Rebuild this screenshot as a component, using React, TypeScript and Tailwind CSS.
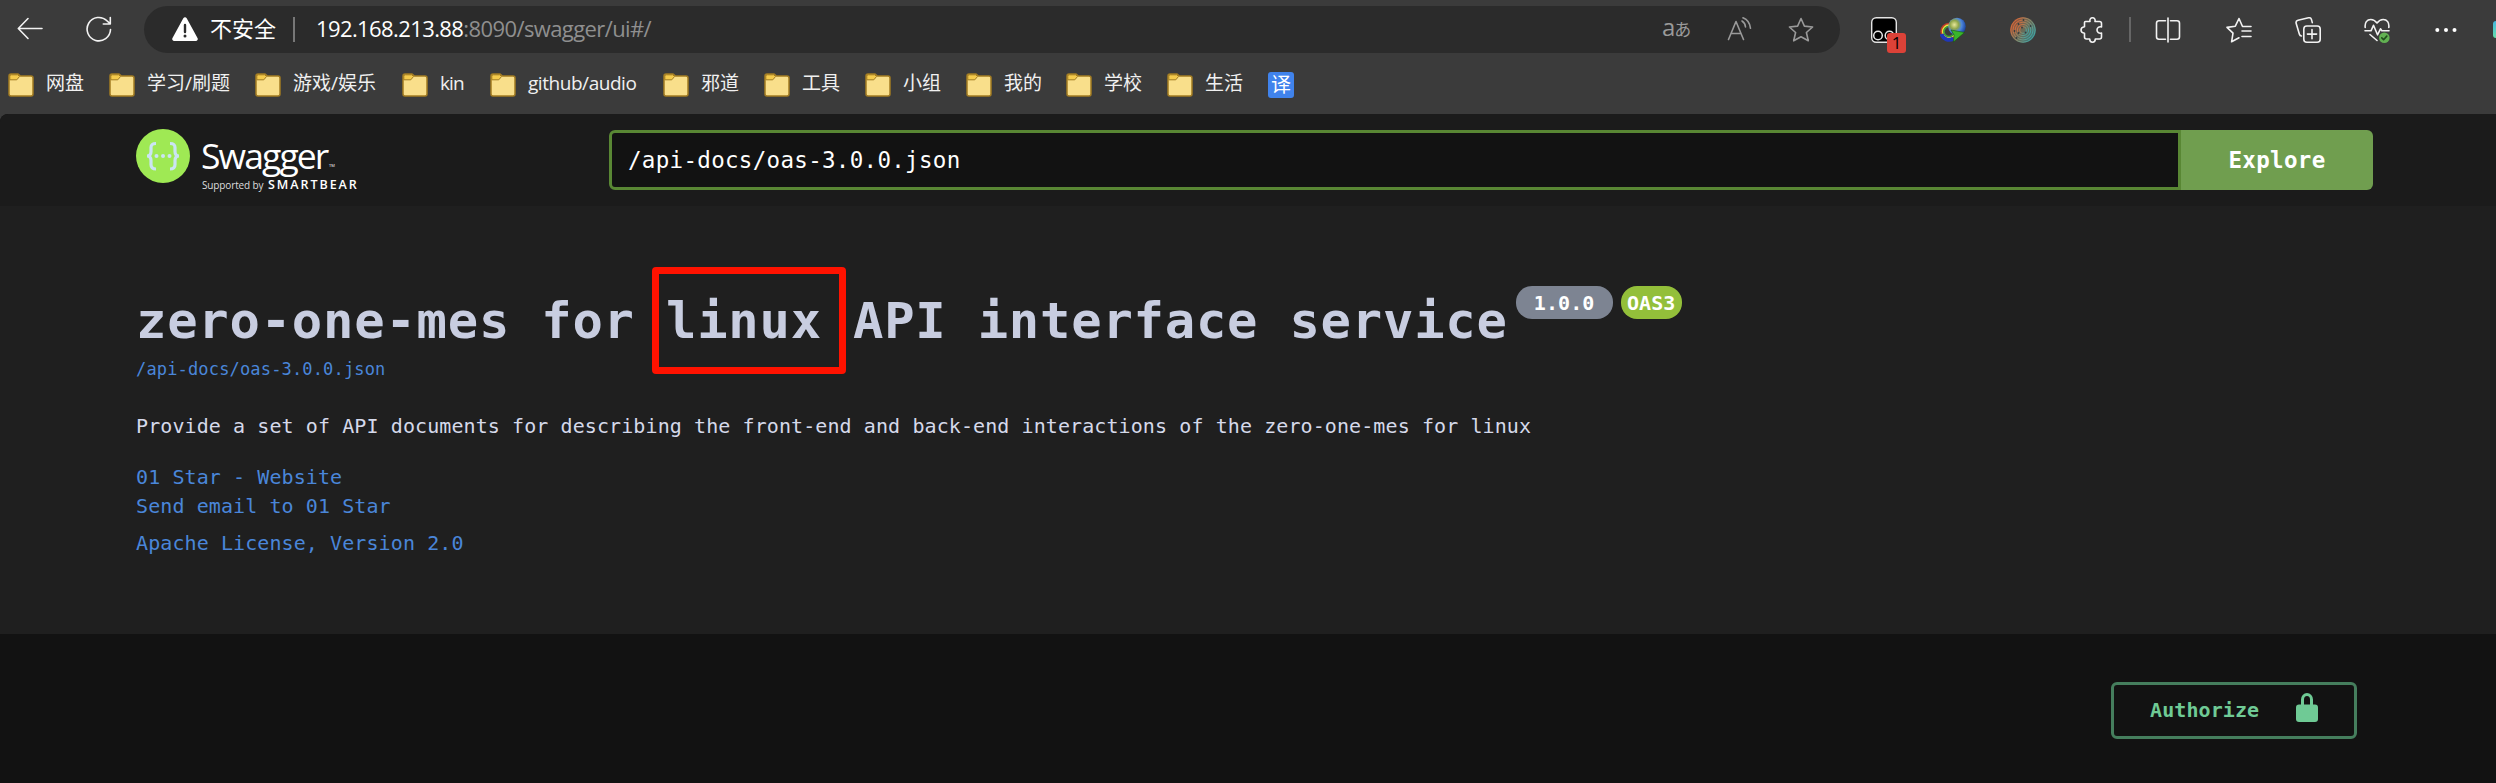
import type { ReactNode } from "react";

const MONO = "font-['DejaVu_Sans_Mono',monospace]";
const UI = "font-['Open_Sans','Noto_Sans_CJK_SC',sans-serif]";

function Icon({ className, children }: { className: string; children: ReactNode }) {
  return (
    <svg
      viewBox="0 0 26 26"
      className={`h-[26px] w-[26px] shrink-0 fill-none stroke-current ${className}`}
      strokeWidth="1.6"
      strokeLinecap="round"
      strokeLinejoin="round"
    >
      {children}
    </svg>
  );
}

function Folder() {
  return (
    <svg viewBox="0 0 26 24" className="h-6 w-[26px] shrink-0">
      <path d="M1 3a2 2 0 0 1 2-2h7l2.500 2H23a2 2 0 0 1 2 2v16a2 2 0 0 1-2 2H3a2 2 0 0 1-2-2z" fill="#f9df8b" stroke="#a27c22" strokeWidth="1.500" />
      <path d="M1.800 3.200A1.500 1.500 0 0 1 3.300 1.800h6.500l1.700 1.700-2.700 3.300h-7z" fill="#f5cb4c" stroke="#a27c22" strokeWidth="1" />
    </svg>
  );
}

const bookmarks = [
  { label: "网盘", width: "w-[63px]", spacing: "tracking-normal" },
  { label: "学习/刷题", width: "w-[108px]", spacing: "tracking-normal" },
  { label: "游戏/娱乐", width: "w-[109px]", spacing: "tracking-normal" },
  { label: "kin", width: "w-[50px]", spacing: "tracking-[-0.900px]" },
  { label: "github/audio", width: "w-[135px]", spacing: "tracking-[-0.450px]" },
  { label: "邪道", width: "w-[63px]", spacing: "tracking-normal" },
  { label: "工具", width: "w-[63px]", spacing: "tracking-normal" },
  { label: "小组", width: "w-[63px]", spacing: "tracking-normal" },
  { label: "我的", width: "w-[62px]", spacing: "tracking-normal" },
  { label: "学校", width: "w-[63px]", spacing: "tracking-normal" },
  { label: "生活", width: "w-[63px]", spacing: "tracking-normal" },
];

function AddressRow() {
  return (
    <div className="flex h-[59px] items-center text-[#f2f2f2]">
      <Icon className="-mt-0.5 ml-[17px]">
        <path d="M25 12.500H1.500M11 2.500 1.300 12.500 11 22.500" />
      </Icon>
      <Icon className="-mt-px ml-[43px]">
        <path d="M24.500 13.500A11.700 11.700 0 1 1 21 4.800L24 7.500M24.300 1.500v6.500h-7" />
      </Icon>
      <div className="ml-8 flex h-[47px] w-[1696px] items-center rounded-full bg-[#2b2b2b] pl-7">
        <svg viewBox="0 0 26 24" className="-mt-px h-6 w-[26px]">
          <path d="M11.300 1.300a2 2 0 0 1 3.400 0L25.500 21a2 2 0 0 1-1.700 3H2.200a2 2 0 0 1-1.700-3z" fill="#fff" />
          <path d="M13 8v7" stroke="#2b2b2b" strokeWidth="2.400" strokeLinecap="round" />
          <circle cx="13" cy="19" r="1.500" fill="#2b2b2b" />
        </svg>
        <span className="-mt-[3px] ml-3 w-[83px] text-[22px] leading-8 text-white">不安全</span>
        <span className="h-[25px] w-0.5 bg-[#777]" />
        <span className="-mt-[3px] ml-[21px] flex-1 text-[22px] leading-8 tracking-[-0.600px] text-[#8f8f8f]">
          <span className="text-white">192.168.213.88</span>:8090/swagger/ui#/
        </span>
        <span className="-mt-[3px] flex w-[27px] items-baseline text-[#9a9a9a]">
          <span className="text-[24px] leading-6">a</span>
          <span className="-ml-px text-[17px] leading-6">あ</span>
        </span>
        <Icon className="ml-[38px] text-[#9a9a9a]">
          <path d="M1.500 22.500 9 4.500l7.500 18M4 16.500h10M15 4c2 1.200 3.300 3.300 3.500 6M16 .8c4.300 1.800 7 5.500 7.500 10.500" />
        </Icon>
        <Icon className="ml-[35px] mr-[26px] text-[#9a9a9a]">
          <path d="m13 1.500 3.400 7.600 8.200.9-6.200 5.500 1.900 8.300L13 19.700l-7.300 4.100 1.900-8.300L1.400 10l8.200-.9z" />
        </Icon>
      </div>
      <div className="relative ml-[31px] h-[26px] w-[26px]">
        <svg viewBox="0 0 26 26" className="h-[26px] w-[26px]">
          <rect x=".7" y=".7" width="24.600" height="24.600" rx="4.500" fill="#000" stroke="#e5e5e5" strokeWidth="1.400" />
          <circle cx="7" cy="18.500" r="4.300" fill="#000" stroke="#e5e5e5" strokeWidth="1.500" />
          <circle cx="18.500" cy="18.500" r="4.300" fill="#000" stroke="#e5e5e5" strokeWidth="1.500" />
        </svg>
        <span className="absolute left-4 top-4 flex h-5 w-[19px] items-center justify-center rounded-[3px] bg-[#dc4238] text-[17px] leading-5 text-black">1</span>
      </div>
      <svg viewBox="0 0 26 26" className="ml-[43px] h-[26px] w-[26px]">
        <defs>
          <radialGradient id="globe" cx=".35" cy=".4" r=".7">
            <stop offset="0" stopColor="#e8e79a" />
            <stop offset=".35" stopColor="#8fa64a" />
            <stop offset=".6" stopColor="#4d86dc" />
            <stop offset="1" stopColor="#123a96" />
          </radialGradient>
        </defs>
        <circle cx="9" cy="14.500" r="7.800" fill="none" stroke="#c43a2a" strokeWidth="1.800" />
        <circle cx="9" cy="14.500" r="6.400" fill="none" stroke="#f0e13c" strokeWidth="1.600" />
        <circle cx="9" cy="14.500" r="5" fill="none" stroke="#3ba33a" strokeWidth="1.500" />
        <path d="M1.500 17a8 8 0 0 0 12 4.500" fill="none" stroke="#1f37b8" strokeWidth="4" />
        <circle cx="17" cy="9.500" r="8.800" fill="url(#globe)" />
        <path d="m11 13 13.500 2.500L13.500 25l.5-7z" fill="#39b62a" stroke="#16520f" strokeWidth=".6" />
      </svg>
      <svg viewBox="0 0 26 26" className="ml-11 h-[26px] w-[26px]">
        <defs>
          <linearGradient id="rings" x1="0" y1="0" x2="1" y2=".7">
            <stop offset=".2" stopColor="#d26a3c" />
            <stop offset=".55" stopColor="#8f8a68" />
            <stop offset="1" stopColor="#3fa6a6" />
          </linearGradient>
        </defs>
        <circle cx="13" cy="13" r="12.800" fill="url(#rings)" opacity=".6" />
        <g fill="none" stroke="url(#rings)" strokeWidth="1">
          <circle cx="13" cy="13" r="12.200" />
          <circle cx="13" cy="13" r="10" />
          <circle cx="13" cy="13" r="7.800" />
          <circle cx="13" cy="13" r="5.600" />
          <circle cx="13" cy="13" r="3.400" />
        </g>
        <g fill="#333c40">
          <circle cx="13.500" cy="3" r=".9" />
          <circle cx="8.500" cy="7" r=".9" />
          <circle cx="20.500" cy="9" r=".9" />
          <circle cx="12" cy="10.500" r=".9" />
          <circle cx="4.500" cy="14" r=".9" />
          <circle cx="15.500" cy="15.500" r=".9" />
          <circle cx="8.500" cy="16" r=".9" />
          <circle cx="6.500" cy="21" r=".9" />
        </g>
      </svg>
      <Icon className="ml-11">
        <path d="M5.500 4.500H10c-.6-2 .6-3.700 2.500-3.700S15.600 2.500 15 4.500h4.500a2 2 0 0 1 2 2V10c-2.600-.7-4.500.8-4.500 3s1.900 3.700 4.500 3v4a2 2 0 0 1-2 2H15.300c0 2.100-1 3.200-2.800 3.200S9.700 24.100 9.700 22H6.500a2 2 0 0 1-2-2v-3.800C2.300 16 1 14.900 1 13s1.300-3 3.500-3.200V5.500a1 1 0 0 1 1-1z" />
      </Icon>
      <span className="ml-[23px] h-[25px] w-0.5 bg-[#666]" />
      <Icon className="ml-[24px]">
        <path d="M10.500 3.700H4A2.500 2.500 0 0 0 1.500 6.200v13.500A2.500 2.500 0 0 0 4 22.200h6.500M15.500 3.700H22a2.500 2.500 0 0 1 2.500 2.500v13.500a2.500 2.500 0 0 1-2.500 2.500h-6.500M13 1v24" />
      </Icon>
      <Icon className="ml-[45px]">
        <path d="M25 9.500h-8.500L13 1.500 9.300 9.200 1 10.400l6 5.800L5.600 24.800l7.400-4M16 14h9M16 19.500h9" />
      </Icon>
      <Icon className="ml-[43px]">
        <path d="M6.500 19c-1.200 0-1.800-.5-2.100-1.700L1.200 6.500C.7 4.700 1.300 3.700 3 3.200l10.500-2.400c1.500-.3 2.600.4 3 1.800l.8 3" />
        <rect x="8.800" y="9" width="16.400" height="16.200" rx="3" />
        <path d="M17 12.500v9.200M12.400 17.100h9.200" />
      </Icon>
      <Icon className="ml-[43px]">
        <path d="M1.200 10.500C.6 5.500 3 2.500 6.800 2.500c2.600 0 4.500 1.300 6.200 3.500 1.700-2.200 3.600-3.500 6.200-3.500 3.800 0 6.200 3 5.600 8M1 13.800h6l2.500-5.500 4 9.500 3-6 1.300 2H25M6 17.500l7 6" />
        <circle cx="20.300" cy="20.700" r="5.300" fill="#62b152" stroke="none" />
        <path d="m17.800 20.900 1.800 1.800 3.200-3.600" stroke="#1f4d1b" />
      </Icon>
      <svg viewBox="0 0 22 6" className="ml-[45px] h-1.5 w-[22px] fill-white">
        <circle cx="2.300" cy="3" r="2" />
        <circle cx="11" cy="3" r="2" />
        <circle cx="19.500" cy="3" r="2" />
      </svg>
      <span className="ml-auto h-[17px] w-[3px] rounded-l-full bg-gradient-to-b from-[#46b5de] to-[#68dfa6]" />
    </div>
  );
}

function Bookmarks() {
  return (
    <div className="flex h-[51px] items-center pl-2 text-[19px] text-[#f0f0f0]">
      {bookmarks.map((b) => (
        <div key={b.label} className="flex shrink-0 items-center gap-3">
          <Folder />
          <span className={`-mt-[3px] whitespace-nowrap leading-6 ${b.width} ${b.spacing}`}>
            {b.label}
          </span>
        </div>
      ))}
      <span className="flex h-[26px] w-[26px] items-center justify-center rounded-[3px] bg-[#4083ec] text-[20px] leading-6 text-white">译</span>
    </div>
  );
}

function Logo() {
  return (
    <div className="flex h-[66px] w-[473px] gap-3 text-white">
      <svg viewBox="0 0 54 54" className="mt-px h-[54px] w-[54px]">
        <circle cx="27" cy="27" r="27" fill="#9fe954" />
        <g fill="none" stroke="#cbe4f3" strokeWidth="3.200">
          <path d="M20 14.500c-4 0-5 1.200-5 4v4c0 3-1 4.500-4 4.500 3 0 4 1.500 4 4.500v4c0 2.800 1 4.500 5 4.500" />
          <path d="M34 14.500c4 0 5 1.200 5 4v4c0 3 1 4.500 4 4.500-3 0-4 1.500-4 4.500v4c0 2.800-1 4.500-5 4.500" />
        </g>
        <g fill="#cbe4f3">
          <circle cx="20.500" cy="27" r="2" />
          <circle cx="27" cy="27" r="2" />
          <circle cx="33.500" cy="27" r="2" />
        </g>
      </svg>
      <div className="-ml-px pt-1">
        <div className="flex h-[46px] items-end">
          <span className="w-[127px] whitespace-nowrap text-[35.500px] font-normal leading-[46px] tracking-[-1.900px]">Swagger</span>
          <span className="mb-2 ml-px text-[4px] leading-[8px]">TM</span>
        </div>
        <div className="flex items-baseline leading-[14px]">
          <span className="ml-px w-[66px] whitespace-nowrap text-[10px] leading-[14px] tracking-[-0.130px] text-[#ddd]">Supported by</span>
          <span className="text-[12.500px] font-semibold leading-[14px] tracking-[1.950px]">SMARTBEAR</span>
        </div>
      </div>
    </div>
  );
}

export default function App() {
  return (
    <div className={`flex h-[783px] w-full flex-col overflow-hidden bg-[#3b3b3b] ${UI}`}>
      <AddressRow />
      <Bookmarks />
      <div className={`mt-1 flex flex-1 flex-col overflow-hidden rounded-tl-lg bg-[#121212] ${MONO}`}>
        <header className={`flex h-[92px] shrink-0 items-start bg-[#1b1b1b] pl-[136px] pt-3.5 ${UI}`}>
          <Logo />
          <div className={`mt-0.5 flex h-[60px] w-[1764px] text-[22.500px] tracking-[0.310px] text-white ${MONO}`}>
            <div className="flex w-[1572px] items-center rounded-l-md border-[3px] border-[#598734] bg-[#121212] pl-4 pt-0.5">
              /api-docs/oas-3.0.0.json
            </div>
            <button className="w-48 rounded-r-md bg-[#709e4f] pt-0.5 font-bold tracking-[0.310px]">Explore</button>
          </div>
        </header>
        <main className="h-[428px] shrink-0 bg-[#1f1f1f] pl-[136px] pt-[80px] text-[20px] tracking-[0.090px] text-[#4a86d9]">
          <div className="flex h-[70px] items-start">
            <h1 className="flex whitespace-pre text-[50.500px] font-bold leading-[70px] tracking-[0.770px] text-[#c8cde0]">
              zero-one-mes for <span className="relative">linux
                <span className="absolute -left-[14px] -top-[19px] h-[107px] w-[194px] rounded-[4px] border-[7px] border-[#ff1200]" />
              </span>{" API interface service"}
            </h1>
            <span className="ml-[8px] flex h-[33px] w-[97px] items-center justify-center rounded-[16px] bg-[#7d8492] font-bold text-white">1.0.0</span>
            <span className="ml-2 flex h-[33px] w-[61px] items-center justify-center rounded-[16px] bg-[#93bf3a] font-bold text-white">OAS3</span>
          </div>
          <div className="mt-px text-[17px] leading-6 tracking-[0.160px]">/api-docs/oas-3.0.0.json</div>
          <p className="mt-[31px] leading-7 text-[#d5d9ea]">
            Provide a set of API documents for describing the front-end and back-end interactions of the zero-one-mes for linux
          </p>
          <div className="mt-[23px] leading-[29px]">01 Star - Website</div>
          <div className="leading-[29px]">Send email to 01 Star</div>
          <div className="mt-2 leading-[29px]">Apache License, Version 2.0</div>
        </main>
        <section className="flex justify-end pr-[139px] pt-12">
          <button className="flex h-[57px] w-[246px] items-center rounded-md border-[3px] border-[#457e5d] pb-px pl-[36px] text-[20px] font-bold tracking-[0.090px] text-[#6fca95]">
            Authorize
            <svg viewBox="0 0 22 29" className="-mt-[5px] ml-[37px] h-[29px] w-[22px]">
              <rect y="11.500" width="22" height="17.500" rx="3" fill="#6fca95" />
              <path d="M6.500 13V6.500a4.500 5 0 0 1 9 0V13" fill="none" stroke="#6fca95" strokeWidth="3" />
            </svg>
          </button>
        </section>
      </div>
    </div>
  );
}
